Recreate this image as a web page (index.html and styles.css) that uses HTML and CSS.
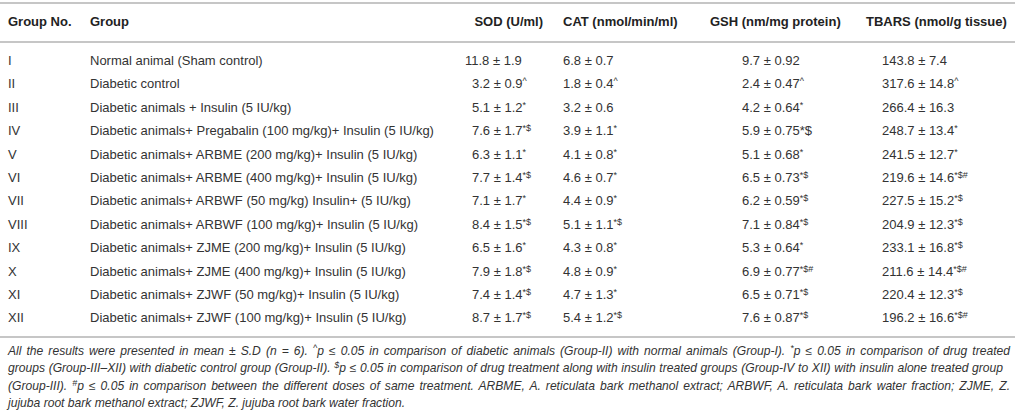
FILE: index.html
```html
<!DOCTYPE html>
<html lang="en">
<head>
  <meta charset="UTF-8" />
  <title>Table</title>
  <link rel="stylesheet" href="styles.css">
</head>
<body>
  <table class="data">
    <colgroup>
      <col class="c-no">
      <col class="c-grp">
      <col class="c-sod">
      <col class="c-cat">
      <col class="c-gsh">
      <col class="c-tba">
    </colgroup>
    <thead>
      <tr>
        <th class="no">Group No.</th>
        <th class="grp">Group</th>
        <th class="sod">SOD (U/ml)</th>
        <th class="cat">CAT (nmol/min/ml)</th>
        <th class="gsh">GSH (nm/mg protein)</th>
        <th class="tba">TBARS (nmol/g tissue)</th>
      </tr>
    </thead>
    <tbody>
      <tr><td>I</td><td>Normal animal (Sham control)</td><td class="v wide">11.8 ± 1.9</td><td class="v">6.8 ± 0.7</td><td class="v">9.7 ± 0.92</td><td class="v">143.8 ± 7.4</td></tr>
      <tr><td>II</td><td>Diabetic control</td><td class="v">3.2 ± 0.9<sup>^</sup></td><td class="v">1.8 ± 0.4<sup>^</sup></td><td class="v">2.4 ± 0.47<sup>^</sup></td><td class="v">317.6 ± 14.8<sup>^</sup></td></tr>
      <tr><td>III</td><td>Diabetic animals + Insulin (5 IU/kg)</td><td class="v">5.1 ± 1.2<sup>*</sup></td><td class="v">3.2 ± 0.6</td><td class="v">4.2 ± 0.64<sup>*</sup></td><td class="v">266.4 ± 16.3</td></tr>
      <tr><td>IV</td><td>Diabetic animals+ Pregabalin (100 mg/kg)+ Insulin (5 IU/kg)</td><td class="v">7.6 ± 1.7<sup>*$</sup></td><td class="v">3.9 ± 1.1<sup>*</sup></td><td class="v">5.9 ± 0.75*$</td><td class="v">248.7 ± 13.4<sup>*</sup></td></tr>
      <tr><td>V</td><td>Diabetic animals+ ARBME (200 mg/kg)+ Insulin (5 IU/kg)</td><td class="v">6.3 ± 1.1<sup>*</sup></td><td class="v">4.1 ± 0.8<sup>*</sup></td><td class="v">5.1 ± 0.68<sup>*</sup></td><td class="v">241.5 ± 12.7<sup>*</sup></td></tr>
      <tr><td>VI</td><td>Diabetic animals+ ARBME (400 mg/kg)+ Insulin (5 IU/kg)</td><td class="v">7.7 ± 1.4<sup>*$</sup></td><td class="v">4.6 ± 0.7<sup>*</sup></td><td class="v">6.5 ± 0.73<sup>*$</sup></td><td class="v">219.6 ± 14.6<sup>*$#</sup></td></tr>
      <tr><td>VII</td><td>Diabetic animals+ ARBWF (50 mg/kg) Insulin+ (5 IU/kg)</td><td class="v">7.1 ± 1.7<sup>*</sup></td><td class="v">4.4 ± 0.9<sup>*</sup></td><td class="v">6.2 ± 0.59<sup>*$</sup></td><td class="v">227.5 ± 15.2<sup>*$</sup></td></tr>
      <tr><td>VIII</td><td>Diabetic animals+ ARBWF (100 mg/kg)+ Insulin (5 IU/kg)</td><td class="v">8.4 ± 1.5<sup>*$</sup></td><td class="v">5.1 ± 1.1<sup>*$</sup></td><td class="v">7.1 ± 0.84<sup>*$</sup></td><td class="v">204.9 ± 12.3<sup>*$</sup></td></tr>
      <tr><td>IX</td><td>Diabetic animals+ ZJME (200 mg/kg)+ Insulin (5 IU/kg)</td><td class="v">6.5 ± 1.6<sup>*</sup></td><td class="v">4.3 ± 0.8<sup>*</sup></td><td class="v">5.3 ± 0.64<sup>*</sup></td><td class="v">233.1 ± 16.8<sup>*$</sup></td></tr>
      <tr><td>X</td><td>Diabetic animals+ ZJME (400 mg/kg)+ Insulin (5 IU/kg)</td><td class="v">7.9 ± 1.8<sup>*$</sup></td><td class="v">4.8 ± 0.9<sup>*</sup></td><td class="v">6.9 ± 0.77<sup>*$#</sup></td><td class="v">211.6 ± 14.4<sup>*$#</sup></td></tr>
      <tr><td>XI</td><td>Diabetic animals+ ZJWF (50 mg/kg)+ Insulin (5 IU/kg)</td><td class="v">7.4 ± 1.4<sup>*$</sup></td><td class="v">4.7 ± 1.3<sup>*</sup></td><td class="v">6.5 ± 0.71<sup>*$</sup></td><td class="v">220.4 ± 12.3<sup>*$</sup></td></tr>
      <tr><td>XII</td><td>Diabetic animals+ ZJWF (100 mg/kg)+ Insulin (5 IU/kg)</td><td class="v">8.7 ± 1.7<sup>*$</sup></td><td class="v">5.4 ± 1.2<sup>*$</sup></td><td class="v">7.6 ± 0.87<sup>*$</sup></td><td class="v">196.2 ± 16.6<sup>*$#</sup></td></tr>
    </tbody>
  </table>
  <div class="note">
    <span class="ln">All the results were presented in mean ± S.D (n = 6). <sup>^</sup>p ≤ 0.05 in comparison of diabetic animals (Group-II) with normal animals (Group-I). <sup>*</sup>p ≤ 0.05 in comparison of drug treated</span>
    <span class="ln short">groups (Group-III–XII) with diabetic control group (Group-II). <sup>$</sup>p ≤ 0.05 in comparison of drug treatment along with insulin treated groups (Group-IV to XII) with insulin alone treated group</span>
    <span class="ln">(Group-III). <sup>#</sup>p ≤ 0.05 in comparison between the different doses of same treatment. ARBME, A. reticulata bark methanol extract; ARBWF, A. reticulata bark water fraction; ZJME, Z.</span>
    <span class="ln last">jujuba root bark methanol extract; ZJWF, Z. jujuba root bark water fraction.</span>
  </div>
</body>
</html>
```

FILE: styles.css
```css
* {
  margin: 0;
  padding: 0;
  box-sizing: border-box;
}
body {
  font-family: 'Liberation Sans', Arial, sans-serif;
  font-size: 13px;
  color: #333;
  background: white;
  padding-top: 2px;
}
.data {
  width: 1015px;
  table-layout: fixed;
  border-collapse: collapse;
  border-top: 2px solid #c6c6c6;
  border-bottom: 2px solid #c6c6c6;
}
.c-no { width: 90px; }
.c-grp { width: 372px; }
.c-sod { width: 98px; }
.c-cat { width: 147px; }
.c-gsh { width: 153px; }
.c-tba { width: 155px; }

.data th {
  font-weight: bold;
  color: #222;
  text-align: left;
  padding: 10px 0 12px;
  border-bottom: 2px solid #c6c6c6;
  white-space: nowrap;
}
.data td {
  padding: 4.5px 0 4.4px;
  line-height: 14.5px;
  white-space: nowrap;
}
.data tbody tr:first-child td {
  padding-top: 11px;
}
.data tbody tr:last-child td {
  padding-bottom: 10px;
}
.data th.no, .data td:first-child {
  padding-left: 8px;
}
.data th.sod {
  text-align: right;
  padding-right: 17px;
}
.data th.cat, .data th.gsh {
  padding-left: 3px;
}
.data th.tba {
  padding-left: 6px;
}
.data td.v:nth-child(3) {
  padding-left: 10px;
}
.data td.v.wide {
  text-indent: -7px;
}
.data td.v:nth-child(4) {
  padding-left: 3px;
}
.data td.v:nth-child(5) {
  padding-left: 35px;
}
.data td.v:nth-child(6) {
  padding-left: 22px;
}
sup {
  font-size: 9px;
  line-height: 0;
  vertical-align: 4px;
}
.note {
  font-style: italic;
  font-size: 12.1px;
  padding: 5px 5px 0 8px;
  line-height: 17.4px;
}
.note .ln {
  display: block;
  white-space: nowrap;
  text-align: justify;
  text-align-last: justify;
}
.note .ln.short {
  margin-right: 7px;
}
.note .ln.last {
  text-align-last: left;
}
```
